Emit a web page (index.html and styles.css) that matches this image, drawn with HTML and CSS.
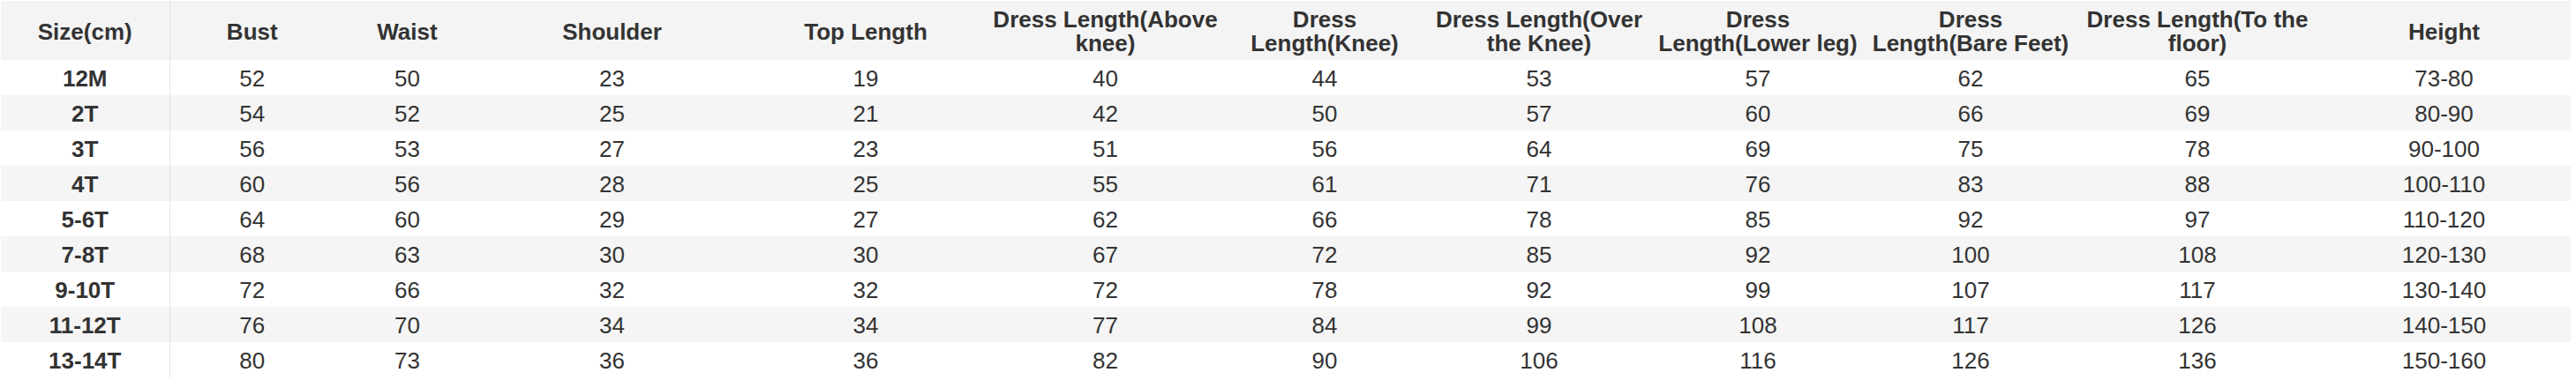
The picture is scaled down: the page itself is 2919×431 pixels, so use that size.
FILE: index.html
```html
<!DOCTYPE html>
<html>
<head>
<meta charset="utf-8">
<link rel="stylesheet" href="styles.css">
</head>
<body>
<table class="size-table">
<colgroup>
<col class="w1"><col class="w2"><col class="w3"><col class="w4"><col class="w5"><col class="w6"><col class="w7"><col class="w8"><col class="w9"><col class="w10"><col class="w11"><col class="w12">
</colgroup>
<thead>
<tr><th class="first">Size(cm)</th><th>Bust</th><th>Waist</th><th>Shoulder</th><th>Top Length</th><th>Dress Length(Above knee)</th><th>Dress Length(Knee)</th><th>Dress Length(Over the Knee)</th><th>Dress Length(Lower leg)</th><th>Dress Length(Bare Feet)</th><th>Dress Length(To the floor)</th><th>Height</th></tr>
</thead>
<tbody>
<tr><td class="first">12M</td><td>52</td><td>50</td><td>23</td><td>19</td><td>40</td><td>44</td><td>53</td><td>57</td><td>62</td><td>65</td><td>73-80</td></tr>
<tr><td class="first">2T</td><td>54</td><td>52</td><td>25</td><td>21</td><td>42</td><td>50</td><td>57</td><td>60</td><td>66</td><td>69</td><td>80-90</td></tr>
<tr><td class="first">3T</td><td>56</td><td>53</td><td>27</td><td>23</td><td>51</td><td>56</td><td>64</td><td>69</td><td>75</td><td>78</td><td>90-100</td></tr>
<tr><td class="first">4T</td><td>60</td><td>56</td><td>28</td><td>25</td><td>55</td><td>61</td><td>71</td><td>76</td><td>83</td><td>88</td><td>100-110</td></tr>
<tr><td class="first">5-6T</td><td>64</td><td>60</td><td>29</td><td>27</td><td>62</td><td>66</td><td>78</td><td>85</td><td>92</td><td>97</td><td>110-120</td></tr>
<tr><td class="first">7-8T</td><td>68</td><td>63</td><td>30</td><td>30</td><td>67</td><td>72</td><td>85</td><td>92</td><td>100</td><td>108</td><td>120-130</td></tr>
<tr><td class="first">9-10T</td><td>72</td><td>66</td><td>32</td><td>32</td><td>72</td><td>78</td><td>92</td><td>99</td><td>107</td><td>117</td><td>130-140</td></tr>
<tr><td class="first">11-12T</td><td>76</td><td>70</td><td>34</td><td>34</td><td>77</td><td>84</td><td>99</td><td>108</td><td>117</td><td>126</td><td>140-150</td></tr>
<tr><td class="first">13-14T</td><td>80</td><td>73</td><td>36</td><td>36</td><td>82</td><td>90</td><td>106</td><td>116</td><td>126</td><td>136</td><td>150-160</td></tr>
</tbody>
</table>
</body>
</html>
```
FILE: styles.css
```css
html, body {
  margin: 0;
  padding: 0;
  background: #ffffff;
}
body {
  padding: 1px 0 0 1px;
  font-family: "Liberation Sans", Arial, sans-serif;
  color: #333;
}
.size-table {
  border-collapse: collapse;
  table-layout: fixed;
  width: 2912px;
  font-size: 26px;
  line-height: 27px;
}
.w1 { width: 191px; }
.w2 { width: 187px; }
.w3 { width: 165px; }
.w4 { width: 299px; }
.w5 { width: 276px; }
.w6 { width: 267px; }
.w7 { width: 230px; }
.w8 { width: 256px; }
.w9 { width: 240px; }
.w10 { width: 242px; }
.w11 { width: 272px; }
.w12 { width: 287px; }
.size-table th,
.size-table td {
  padding: 8px 6px 5px;
  text-align: center;
  vertical-align: middle;
}
.size-table th {
  font-weight: bold;
  background: #f4f4f4;
}
.size-table td {
  font-weight: normal;
}
.size-table td.first {
  font-weight: bold;
}
.size-table .first {
  border-right: 1px solid #e2e2e2;
}
.size-table tbody tr:nth-child(even) td {
  background: #f5f5f5;
}
```
